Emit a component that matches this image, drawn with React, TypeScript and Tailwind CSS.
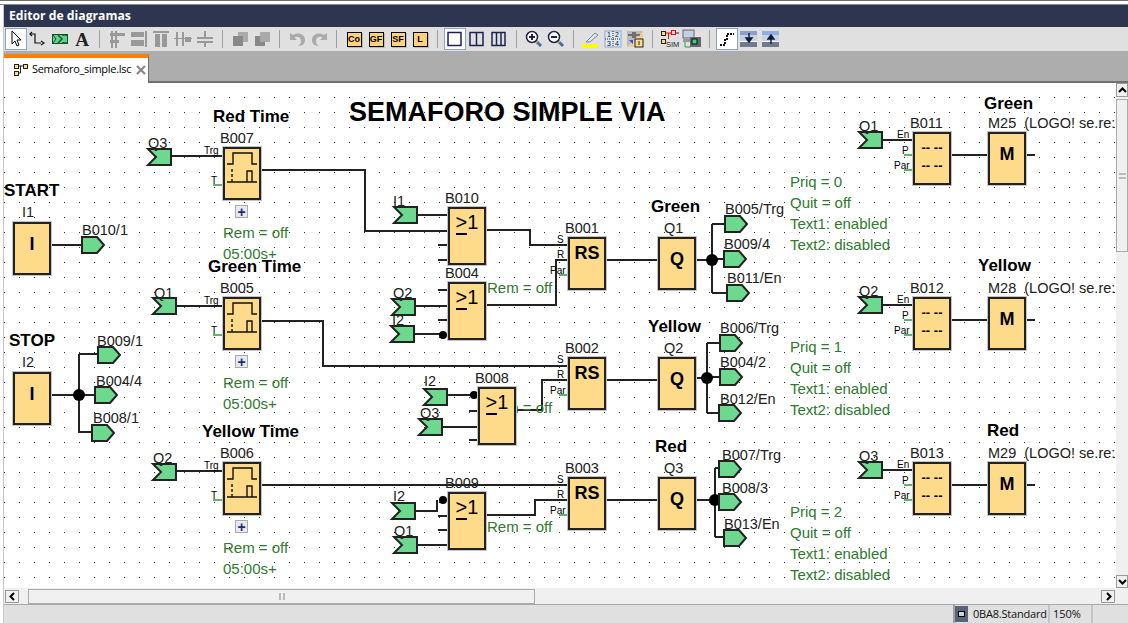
import React from "react";

const F = "#fddb8b";
const W = "#222";

const toolbarGroups: string[][] = [
  ["pointer", "wire", "conn", "text"],
  ["alignL", "alignR", "alignT", "alignV", "alignH"],
  ["stackA", "stackB"],
  ["undo", "redo"],
  ["Co", "GF", "SF", "L"],
  ["one", "two", "three"],
  ["zoomIn", "zoomOut"],
  ["marker", "grid", "cross"],
  ["sim", "online"],
  ["route", "down", "up"],
];

function ToolIcon({ name }: { name: string }) {
  if (["Co", "GF", "SF", "L"].includes(name)) {
    return (
      <span className="flex h-[15px] w-[15px] items-center justify-center border border-black bg-[#fdd27a] text-[9px] font-bold leading-none shadow-[1px_1px_0_#bbb]">
        {name}
      </span>
    );
  }
  if (name === "text") {
    return <span className="font-['Liberation_Serif',serif] text-[19px] font-bold leading-none text-[#222]">A</span>;
  }
  const gray = "#999";
  const navy = "#1c2350";
  return (
    <svg width="20" height="20" viewBox="0 0 20 20">
      {name === "pointer" && <path d="M6 2v13l3-3 2 5 2-1-2-5h4z" fill="#fff" stroke="#000" />}
      {name === "wire" && (
        <g fill="none" stroke="#111" strokeWidth="1.2">
          <path d="M2 5h5v9h6" />
          <path d="M4 3L2 5l2 2M13 12l3 2-3 2" />
        </g>
      )}
      {name === "conn" && (
        <g stroke="#14502a" strokeWidth="1">
          <rect x="2.5" y="5.5" width="15" height="9" fill="#5fd488" />
          <path d="M8 6l4 4-4 4M12 6h5M12 14h5" fill="none" strokeWidth="1.4" />
          <path d="M3 6l3 4-3 4" fill="none" />
        </g>
      )}
      {name === "alignL" && (
        <g fill={gray}>
          <rect x="4" y="2" width="2" height="17" />
          <rect x="8" y="2" width="2" height="17" />
          <rect x="3" y="4" width="15" height="3" />
          <rect x="3" y="11" width="9" height="3" />
        </g>
      )}
      {name === "alignR" && (
        <g fill={gray}>
          <rect x="2" y="3" width="13" height="5" />
          <rect x="2" y="11" width="13" height="6" />
          <rect x="16" y="2" width="2" height="16" />
        </g>
      )}
      {name === "alignT" && (
        <g fill={gray}>
          <rect x="2" y="2" width="16" height="2" />
          <rect x="4" y="5" width="5" height="13" />
          <rect x="11" y="5" width="5" height="13" />
        </g>
      )}
      {name === "alignV" && (
        <g fill={gray}>
          <rect x="3" y="3" width="2" height="14" />
          <rect x="9" y="3" width="2" height="14" />
          <rect x="1" y="9" width="18" height="1" />
          <rect x="12" y="8" width="6" height="5" />
        </g>
      )}
      {name === "alignH" && (
        <g fill={gray}>
          <rect x="9" y="2" width="2" height="6" />
          <rect x="2" y="8" width="16" height="2" />
          <rect x="2" y="12" width="16" height="2" />
          <rect x="9" y="14" width="2" height="4" />
        </g>
      )}
      {name === "stackA" && (
        <g>
          <rect x="8" y="3" width="10" height="10" fill="#aaa" />
          <rect x="3" y="7" width="10" height="10" fill="#888" />
        </g>
      )}
      {name === "stackB" && (
        <g>
          <rect x="3" y="7" width="10" height="10" fill="#888" />
          <rect x="8" y="3" width="10" height="10" fill="#aaa" />
        </g>
      )}
      {name === "undo" && (
        <path d="M3 4v7h7L7.5 8.5C10 7 14 8 14 12c0 2-1 4-3 5 5 0 7-3 7-6 0-6-7-8-12-5z" fill="#aaa" />
      )}
      {name === "redo" && (
        <path d="M18 4v7h-7l2.5-2.5C11 7 7 8 7 12c0 2 1 4 3 5-5 0-7-3-7-6 0-6 7-8 12-5z" fill="#aaa" />
      )}
      {name === "one" && <rect x="3" y="3.5" width="13" height="13" fill="#fff" stroke={navy} strokeWidth="1.5" />}
      {name === "two" && (
        <g fill="none" stroke={navy} strokeWidth="1.5">
          <rect x="3" y="3.5" width="13" height="13" />
          <path d="M9.5 3.5v13" />
        </g>
      )}
      {name === "three" && (
        <g fill="none" stroke={navy} strokeWidth="1.5">
          <rect x="3" y="3.5" width="13" height="13" />
          <path d="M7.5 3.5v13M12 3.5v13" />
        </g>
      )}
      {(name === "zoomIn" || name === "zoomOut") && (
        <g>
          <path d="M12 12l5 5" stroke="#3f6ea8" strokeWidth="3" />
          <path d="M11.5 11.5l2 2" stroke="#d9a43a" strokeWidth="3" />
          <circle cx="8" cy="8" r="5.5" fill="#fff" stroke={navy} strokeWidth="1.5" />
          <path d={name === "zoomIn" ? "M5 8h6M8 5v6" : "M5 8h6"} stroke={navy} strokeWidth="2" />
        </g>
      )}
      {name === "marker" && (
        <g>
          <path d="M5 13l9-9 3 2-8 7z" fill="#dde6ee" stroke="#7788a0" />
          <rect x="1" y="15" width="16" height="4" fill="#ffff00" />
        </g>
      )}
      {name === "grid" && (
        <g>
          <rect x="2" y="2" width="16" height="16" fill="#dfe8f5" stroke="#8fa8d0" />
          <path d="M2 10h16M10 2v16" stroke="#223" strokeDasharray="1 1" />
          <text x="4" y="8" fontSize="7" fill="#111">1</text>
          <text x="12" y="8" fontSize="7" fill="#111">2</text>
          <text x="4" y="16.5" fontSize="7" fill="#111">3</text>
          <text x="12" y="16.5" fontSize="7" fill="#111">4</text>
        </g>
      )}
      {name === "cross" && (
        <g>
          <path d="M2 2h16v16H2z" fill="#e9cf9d" />
          <path d="M2 2h16L2 18z" fill="#bbb" />
          <path d="M3 6h4M11 6h4M8 3v6M10 3v6" stroke="#222" />
          <rect x="10" y="10" width="8" height="8" fill={F} stroke="#222" />
          <path d="M14 12v4" stroke="#222" />
          <path d="M4 11l4 0v4z" fill="#2a48ff" />
        </g>
      )}
      {name === "sim" && (
        <g>
          <rect x="1.5" y="2.5" width="4" height="4" fill={F} stroke="#222" />
          <rect x="1.5" y="10.5" width="4" height="4" fill={F} stroke="#222" />
          <rect x="11.5" y="1.5" width="4" height="4" fill="none" stroke="#f00" />
          <path d="M6 4h6M8.500 4v6" stroke="#f00" />
          <path d="M16 4h3" stroke="#222" />
          <text x="6" y="18" fontSize="7.500" fill="#222">SIM</text>
        </g>
      )}
      {name === "online" && (
        <g>
          <rect x="1" y="1" width="11" height="8" fill="#c4cfe0" stroke="#667" />
          <rect x="1" y="10" width="7" height="3" fill="#999" />
          <path d="M3 13v5h6" stroke="#1aa84a" fill="none" />
          <rect x="8" y="8" width="11" height="10" fill="#667" />
          <rect x="10" y="10" width="5" height="5" fill="#39d46a" stroke="#111" />
        </g>
      )}
      {name === "route" && (
        <path d="M3 16h5v-6h2V5h7" fill="none" stroke="#111" strokeWidth="2" strokeDasharray="2 1" />
      )}
      {(name === "down" || name === "up") && (
        <g>
          <rect x="1" y="2" width="17" height="16" fill={name === "down" ? "#8ea0c8" : "#8eb0e0"} />
          <rect x="1" y="6" width="17" height="6" fill="#c9d2e2" />
          <rect x="1" y="13" width="17" height="5" fill="#707a8a" />
          <rect x="1" y="12" width="17" height="1" fill="#fff" />
          <path
            d={name === "down" ? "M10 4v7M7 9l3 4 3-4z" : "M10 15V8M7 10l3-4 3 4z"}
            stroke="#0c1c40"
            strokeWidth="1.4"
            fill="#0c1c40"
          />
        </g>
      )}
    </svg>
  );
}

function Toolbar() {
  const active = ["pointer", "one", "route"];
  return (
    <div className="flex h-[24px] items-center bg-[#e0e0e0] pl-[1px]">
      {toolbarGroups.map((group, i) => (
        <React.Fragment key={i}>
          {i > 0 && (
            <div className="flex w-[13px] justify-center">
              <span className="h-[18px] w-px bg-[#a0a0a0]" />
            </div>
          )}
          {group.map((name) => (
            <div
              key={name}
              className={
                active.includes(name)
                  ? "flex h-[22px] w-[22px] items-center justify-center border border-[#8aa5c2] bg-white"
                  : "flex h-[22px] w-[22px] items-center justify-center"
              }
            >
              <ToolIcon name={name} />
            </div>
          ))}
        </React.Fragment>
      ))}
    </div>
  );
}

type Kind = "timer" | "or" | "rs" | "q" | "input" | "msg" | "m";
const blocks: [number, number, Kind][] = [
  [13, 222, "input"],
  [13, 372, "input"],
  [223, 147, "timer"],
  [223, 297, "timer"],
  [223, 462, "timer"],
  [448, 207, "or"],
  [448, 282, "or"],
  [478, 387, "or"],
  [448, 492, "or"],
  [568, 237, "rs"],
  [568, 357, "rs"],
  [568, 477, "rs"],
  [658, 237, "q"],
  [658, 357, "q"],
  [658, 477, "q"],
  [913, 132, "msg"],
  [913, 297, "msg"],
  [913, 462, "msg"],
  [988, 132, "m"],
  [988, 297, "m"],
  [988, 462, "m"],
];

function Block({ x, y, kind }: { x: number; y: number; kind: Kind }) {
  const h = kind === "or" ? 58 : 53;
  return (
    <div
      className="absolute flex w-[38px] flex-col items-center border-2 border-[#222] bg-[#fddb8b] text-black shadow-[0_0_0_1px_#c4c4c4]"
      style={{ left: x, top: y, height: h }}
    >
      {kind === "input" && <span className="mt-[8px] text-[18px] font-bold leading-6">I</span>}
      {kind === "q" && <span className="mt-[8px] text-[18px] font-bold leading-6">Q</span>}
      {kind === "m" && <span className="mt-[8px] text-[18px] font-bold leading-6">M</span>}
      {kind === "rs" && <span className="mt-[2px] text-[18px] font-bold leading-6">RS</span>}
      {kind === "or" && (
        <span className="mt-[1px] flex text-[20px] leading-6">
          <span className="h-[25px] border-b-2 border-black">&gt;</span>1
        </span>
      )}
      {kind === "msg" && (
        <>
          <span className="mt-[6px] text-[13px] font-bold leading-4">-- --</span>
          <span className="mt-[2px] text-[13px] font-bold leading-4">-- --</span>
        </>
      )}
      {kind === "timer" && (
        <svg width="34" height="49" viewBox="0 0 34 49" className="shrink-0">
          <path d="M2 15h6V4h19v11h5M2 33h30M22 33V22h5v11" fill="none" stroke="#111" strokeWidth="1.4" />
          <path d="M7 20v13" fill="none" stroke="#111" strokeWidth="1.4" strokeDasharray="3 2" />
        </svg>
      )}
    </div>
  );
}

// x, y are the top-left corner
const inputs = [
  [148, 149], [153, 298], [153, 464], [394, 207], [392, 299], [391, 326], [424, 389], [419, 419], [392, 503], [394, 537],
  [859, 132], [859, 297], [859, 462],
];
const outputs = [
  [82, 237], [98, 347], [95, 387], [92, 425], [725, 216], [724, 251], [727, 285], [720, 335], [720, 369], [719, 405],
  [719, 461], [719, 494], [724, 530],
];

const wires = [
  "M171 156H223", "M260 170H365V231H448", "M417 215H448", "M438 245H448", "M438 260H448",
  "M485 230H530V245H568", "M438 290H448", "M438 320H448", "M415 306H448", "M414 334H442",
  "M485 305H556V260H568", "M605 260H658", "M695 260H712M712 224V293M712 224H725M712 259H724M712 293H727",
  "M260 321H323V366H568", "M515 410H542V380H568", "M605 380H658",
  "M695 378H707M707 343V413M707 343H720M707 377H720M707 413H719",
  "M447 395H474", "M469 411H478", "M469 440H478", "M442 427H478",
  "M260 485H568", "M176 471H223", "M416 511H437V500", "M438 516H448", "M438 530H448", "M417 545H448",
  "M485 515H535V500H568", "M605 500H658", "M695 500H715M715 468V537M715 468H719M715 502H719M715 537H724",
  "M50 395H79M79 354V433M79 354H98M79 395H95M79 432H92", "M50 245H82", "M176 306H223",
  "M882 140H913", "M950 155H988", "M1025 155H1035", "M882 305H913", "M950 320H988", "M1025 320H1035",
  "M882 470H913", "M950 485H988", "M1025 485H1035",
];
const greenStubs = [
  "M213 185H223", "M213 335H223", "M213 500H223", "M559 275H568", "M559 395H568", "M559 515H568",
  "M904 155H913", "M904 170H913", "M904 320H913", "M904 335H913", "M904 485H913", "M904 500H913",
];
const junctions: [number, number, number][] = [
  [79, 395, 6], [712, 260, 6], [707, 378, 6], [715, 500, 6], [443, 335, 4], [474, 395, 4], [443, 500, 4],
];

function Wires() {
  return (
    <svg width="1128" height="623" className="absolute left-0 top-0">
      <defs>
        <pattern id="dots" x="4" y="7" width="15" height="15" patternUnits="userSpaceOnUse">
          <rect width="1" height="1" fill="#333" />
        </pattern>
      </defs>
      <rect width="1128" height="623" fill="url(#dots)" />
      {wires.map((d) => (
        <path key={d} d={d} fill="none" stroke={W} strokeWidth="2" />
      ))}
      {greenStubs.map((d) => (
        <path key={d} d={d} fill="none" stroke="#2f9a3a" strokeWidth="1.5" />
      ))}
      {junctions.map(([x, y, r]) => (
        <circle key={`${x}-${y}`} cx={x} cy={y} r={r} fill="#000" />
      ))}
      {inputs.map(([x, y]) => (
        <path key={`${x}-${y}`} d={`M${x} ${y}h23v16h-23l8-8z`} fill="#6cd98f" stroke={W} strokeWidth="2" />
      ))}
      {outputs.map(([x, y]) => (
        <path key={`${x}-${y}`} d={`M${x} ${y}h15l7 8-7 8h-15z`} fill="#6cd98f" stroke={W} strokeWidth="2" />
      ))}
    </svg>
  );
}

// x, vertical centre, text
const names: [number, number, string][] = [
  [22, 212, "I1"], [22, 362, "I2"], [82, 230, "B010/1"], [220, 138, "B007"], [148, 143, "Q3"], [220, 288, "B005"],
  [154, 293, "Q1"], [220, 453, "B006"], [153, 458, "Q2"], [97, 341, "B009/1"], [96, 381, "B004/4"], [93, 418, "B008/1"],
  [393, 201, "I1"], [445, 198, "B010"], [445, 273, "B004"], [393, 293, "Q2"], [392, 320, "I2"], [565, 228, "B001"],
  [565, 348, "B002"], [475, 378, "B008"], [424, 381, "I2"], [420, 413, "Q3"], [565, 468, "B003"], [445, 483, "B009"],
  [393, 496, "I2"], [394, 531, "Q1"], [664, 228, "Q1"], [664, 348, "Q2"], [664, 468, "Q3"], [725, 209, "B005/Trg"],
  [724, 244, "B009/4"], [727, 278, "B011/En"], [720, 328, "B006/Trg"], [720, 362, "B004/2"], [720, 399, "B012/En"],
  [722, 455, "B007/Trg"], [722, 488, "B008/3"], [724, 524, "B013/En"], [859, 126, "Q1"], [910, 123, "B011"],
  [988, 123, "M25  (LOGO! se.re:"], [859, 291, "Q2"], [910, 288, "B012"], [988, 288, "M28  (LOGO! se.re:"],
  [859, 456, "Q3"], [910, 453, "B013"], [988, 453, "M29  (LOGO! se.re:"],
];
const headings: [number, number, string][] = [
  [213, 116, "Red Time"], [208, 266, "Green Time"], [202, 431, "Yellow Time"], [4, 190, "START"], [9, 340, "STOP"],
  [651, 206, "Green"], [648, 326, "Yellow"], [655, 446, "Red"], [984, 103, "Green"], [978, 265, "Yellow"], [987, 430, "Red"],
];
const params: [number, number, string][] = [
  [223, 232, "Rem = off"], [223, 253, "05:00s+"], [223, 382, "Rem = off"], [223, 403, "05:00s+"],
  [223, 547, "Rem = off"], [223, 568, "05:00s+"], [487, 287, "Rem = off"], [487, 407, "Rem = off"], [487, 526, "Rem = off"],
  [790, 181, "Priq = 0"], [790, 202, "Quit = off"], [790, 223, "Text1: enabled"], [790, 244, "Text2: disabled"],
  [790, 346, "Priq = 1"], [790, 367, "Quit = off"], [790, 388, "Text1: enabled"], [790, 409, "Text2: disabled"],
  [790, 511, "Priq = 2"], [790, 532, "Quit = off"], [790, 553, "Text1: enabled"], [790, 574, "Text2: disabled"],
];
const pins: [number, number, string][] = [
  [204, 151, "Trg"], [211, 181, "T"], [204, 301, "Trg"], [211, 331, "T"], [204, 466, "Trg"], [211, 496, "T"],
  [557, 240, "S"], [557, 255, "R"], [550, 271, "Par"], [557, 360, "S"], [557, 375, "R"], [550, 391, "Par"],
  [557, 480, "S"], [557, 495, "R"], [550, 511, "Par"],
  [897, 135, "En"], [902, 151, "P"], [894, 166, "Par"], [897, 300, "En"], [902, 316, "P"], [894, 331, "Par"],
  [897, 465, "En"], [902, 481, "P"], [894, 496, "Par"],
];

function Expand({ y }: { y: number }) {
  return (
    <div
      className="absolute left-[235px] flex h-[13px] w-[13px] items-center justify-center border border-[#aaa] bg-[#e8e8f0] text-[14px] font-bold leading-none text-[#1c2f70]"
      style={{ top: y }}
    >
      +
    </div>
  );
}

function Canvas() {
  return (
    <div className="relative min-w-0 flex-1 overflow-hidden bg-white">
      <div className="absolute left-[-4px] top-[-83px] h-[623px] w-[1128px] whitespace-pre">
        <Wires />
        {params.map(([x, y, t]) => (
          <span key={`${x}-${y}`} className="absolute text-[15px] leading-5 text-[#2f7a2f]" style={{ left: x, top: y - 9 }}>
            {t}
          </span>
        ))}
        {blocks.map(([x, y, kind]) => (
          <Block key={`${x}-${y}`} x={x} y={y} kind={kind} />
        ))}
        {[205, 355, 520].map((y) => (
          <Expand key={y} y={y} />
        ))}
        {names.map(([x, y, t]) => (
          <span key={`${x}-${y}`} className="absolute text-[14.5px] leading-4 text-[#222]" style={{ left: x, top: y - 8 }}>
            {t}
          </span>
        ))}
        {headings.map(([x, y, t]) => (
          <span key={`${x}-${y}`} className="absolute text-[17px] font-bold leading-5 text-black" style={{ left: x, top: y - 9 }}>
            {t}
          </span>
        ))}
        {pins.map(([x, y, t]) => (
          <span key={`${x}-${y}`} className="absolute text-[10px] leading-3 text-black" style={{ left: x, top: y - 6 }}>
            {t}
          </span>
        ))}
        <span className="absolute left-[349px] top-[96px] text-[27px] font-bold leading-8 text-black">SEMAFORO SIMPLE VIA</span>
      </div>
    </div>
  );
}

function ArrowButton({ d, className }: { d: string; className: string }) {
  return (
    <div className={`flex items-center justify-center border border-[#999] bg-[#f0f0f0] ${className}`}>
      <svg width="9" height="9" viewBox="0 0 9 9">
        <path d={d} fill="none" stroke="#000" strokeWidth="2" />
      </svg>
    </div>
  );
}

export default function App() {
  return (
    <div className="flex h-[623px] w-[1128px] flex-col overflow-hidden bg-white font-['Liberation_Sans',sans-serif]">
      <div className="h-[5px] shrink-0 border-t border-b border-t-[#6e6e6e] border-b-[#888] bg-white" />
      <div className="flex min-h-0 flex-1">
        <div className="w-[4px] shrink-0 border-r border-[#c8c8c8] bg-white" />
        <div className="flex min-w-0 flex-1 flex-col">
          <div className="flex h-[22px] shrink-0 items-center bg-[#2d3550] pl-[5px] font-['Open_Sans',sans-serif] text-[12.2px] font-bold text-white">
            Editor de diagramas
          </div>
          <Toolbar />
          <div className="flex h-[32px] shrink-0 border-b-2 border-[#707070] bg-[#adadad] pt-[3px]">
            <div className="relative flex h-[29px] w-[145px] items-center border-t-4 border-r border-t-[#ff8000] border-r-[#707070] bg-white pb-[2px] pl-[9px]">
              <svg width="16" height="14" viewBox="0 0 16 14">
                <g fill="#fddb8b" stroke="#222">
                  <rect x="1.5" y="1.5" width="4" height="4" />
                  <rect x="1.5" y="8.5" width="4" height="4" />
                  <rect x="10.5" y="1.5" width="4" height="4" />
                </g>
                <path d="M5.5 3H10.500M7.5 3V10H5.500" fill="none" stroke="#222" />
              </svg>
              <span className="ml-[3px] font-['Open_Sans',sans-serif] text-[11px] tracking-[-0.3px] text-black">Semaforo_simple.lsc</span>
              <svg width="10" height="10" viewBox="0 0 10 10" className="ml-[5px]">
                <path d="M1 1l8 8M9 1l-8 8" stroke="#888" strokeWidth="2.200" />
              </svg>
            </div>
          </div>
          <div className="flex min-h-0 flex-1">
            <Canvas />
            <div className="flex w-[12px] shrink-0 flex-col items-stretch bg-[#f0f0f0]">
              <ArrowButton d="M1 6l3.500-3.500L8 6" className="h-[14px]" />
              <div className="mt-[2px] flex h-[153px] items-center justify-center border border-[#aaa] bg-[#f0f0f0]">
                <span className="h-[6px] w-[7px] border-y-2 border-[#bbb]" />
              </div>
              <div className="flex-1" />
              <ArrowButton d="M1 3l3.500 3.500L8 3" className="h-[13px]" />
            </div>
          </div>
          <div className="flex h-[16px] shrink-0 items-center bg-[#f0f0f0] pr-[13px]">
            <ArrowButton d="M6 1L2.500 4.500 6 8" className="ml-[1px] h-[13px] w-[14px]" />
            <div className="ml-[9px] flex h-[15px] w-[507px] items-center justify-center border border-[#aaa] bg-[#f0f0f0]">
              <span className="h-[7px] w-[6px] border-x-2 border-[#bbb]" />
            </div>
            <div className="flex-1" />
            <ArrowButton d="M3 1l3.500 3.500L3 8" className="h-[13px] w-[14px]" />
          </div>
          <div className="flex h-[19px] shrink-0 border-t border-[#a8a8a8] bg-[#e0e0e0] pl-[949px] font-['Open_Sans',sans-serif] text-[11px] text-[#111]">
            <div className="flex w-[95px] items-center border-l-2 border-[#a0a0a0]">
              <span className="flex h-[16px] w-[13px] items-center justify-center bg-[#5a6478]">
                <span className="h-[6px] w-[7px] border border-black bg-[#cdd4dd]" />
              </span>
              <span className="ml-[5px] tracking-[-0.2px]">0BA8.Standard</span>
            </div>
            <div className="flex w-[45px] items-center border-x-2 border-[#c4c4c4] pl-[3px]">150%</div>
          </div>
        </div>
      </div>
    </div>
  );
}
